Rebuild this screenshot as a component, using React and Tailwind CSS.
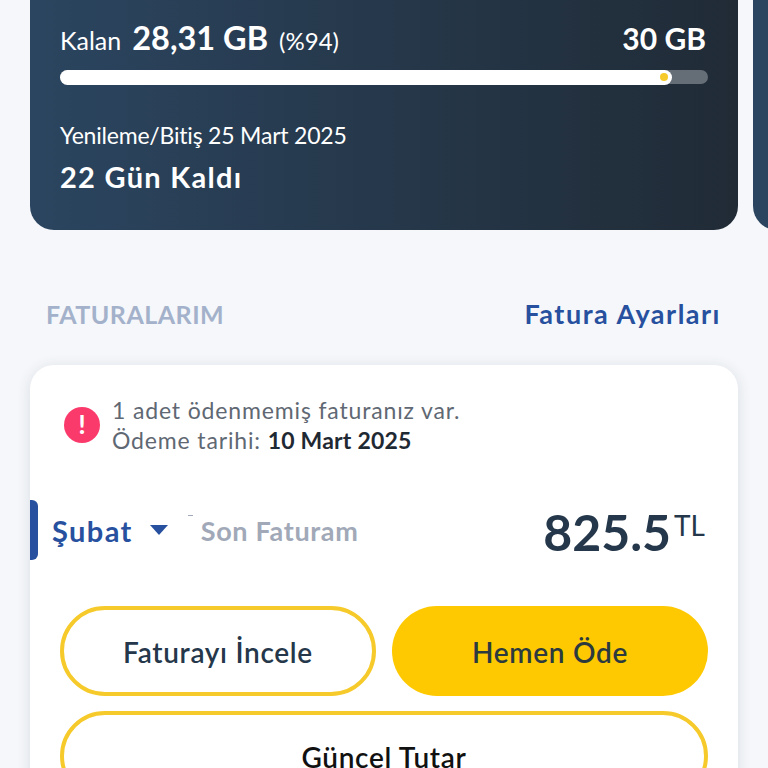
function OutlineButton({ children, className }) {
  return (
    <button className={`h-[90px] rounded-[45px] border-[4px] border-[#f6ca2a] bg-white pt-[3px] text-[28px] font-semibold tracking-[0.7px] ${className}`}>
      {children}
    </button>
  );
}

export default function App() {
  return (
    <div className="h-[768px] w-[768px] overflow-hidden bg-[#f5f7fa] font-['Lato',sans-serif]">
      {/* usage cards, the second one is cut off by the window */}
      <div className="flex gap-[15px] pl-[30px]">
        <div className="h-[230px] w-[708px] shrink-0 rounded-b-[24px] bg-gradient-to-r from-[#2b4560] to-[#202b36] px-[30px] pt-[14px] text-white">
          <div className="flex items-baseline justify-between pr-[2px]">
            <div className="flex items-baseline">
              <span className="text-[25px]">Kalan</span>
              <span className="ml-[11px] text-[32.5px] font-bold">28,31 GB</span>
              <span className="ml-[11px] text-[24px]">(%94)</span>
            </div>
            <span className="text-[30px] font-bold">30 GB</span>
          </div>
          <div className="mt-[7px] h-[14px] w-[648px] rounded-full bg-[#656d76]">
            <div className="flex h-[15px] w-[612px] items-center justify-end rounded-full bg-white pr-[4px]">
              <span className="h-[8px] w-[8px] rounded-full bg-[#f6ca2a]" />
            </div>
          </div>
          <p className="mt-[36px] text-[23px] leading-[30px] tracking-[-0.2px]">Yenileme/Bitiş 25 Mart 2025</p>
          <p className="mt-[9px] text-[29px] font-bold leading-[36px] tracking-[1.3px]">22 Gün Kaldı</p>
        </div>
        <div className="h-[230px] w-[40px] shrink-0 rounded-bl-[24px] bg-[#2b4560]" />
      </div>

      <div className="mt-[64px] flex items-center justify-between pl-[46px] pr-[47px]">
        <h2 className="text-[25px] font-bold tracking-[0.5px] text-[#a3b1ca]">FATURALARIM</h2>
        <a className="text-[27px] font-bold tracking-[1.5px] text-[#27509f]">Fatura Ayarları</a>
      </div>

      {/* invoice card */}
      <div className="ml-[30px] mt-[30px] h-[500px] w-[708px] rounded-[24px] bg-white pt-[30px] shadow-[0_2px_14px_rgba(60,70,90,0.14)]">
        <div className="flex items-center pl-[34px]">
          <span className="flex h-[36px] w-[36px] items-center justify-center rounded-full bg-[#fb3a6c] text-[27px] font-bold text-white">!</span>
          <div className="ml-[12px] text-[23px] leading-[30px] tracking-[0.85px] text-[#5f6873]">
            <p>1 adet ödenmemiş faturanız var.</p>
            <p>
              Ödeme tarihi: <span className="font-bold tracking-[0.2px] text-[#1f2933]">10 Mart 2025</span>
            </p>
          </div>
        </div>

        <div className="relative mt-[45px] flex h-[60px] items-center pr-[33px]">
          <span className="h-[60px] w-[8px] rounded-r-[6px] bg-[#27509f]" />
          <span className="ml-[14px] mt-[2px] text-[29px] font-bold tracking-[1.4px] text-[#27509f]">Şubat</span>
          <svg className="ml-[16px]" width="20" height="12" viewBox="0 0 20 12">
            <path d="M1 1h18l-9 10z" fill="#27509f" />
          </svg>
          <span className="absolute left-[158px] top-[15px] h-px w-[5px] bg-[#a1a9b8]" />
          <span className="ml-[32px] mt-[4px] text-[27px] font-bold tracking-[0.65px] text-[#a1a9b8]">Son Faturam</span>
          <div className="ml-auto mt-[4px] flex items-start text-[#25374a]">
            <span className="text-[50px] font-bold leading-none">825.5</span>
            <span className="ml-[3px] mt-[4px] text-[28px] leading-none">TL</span>
          </div>
        </div>

        <div className="mt-[46px] grid grid-cols-2 gap-x-[16px] gap-y-[15px] px-[30px]">
          <OutlineButton className="text-[#25374a]">Faturayı İncele</OutlineButton>
          <button className="h-[90px] rounded-[45px] bg-[#fec900] pt-[3px] text-[28px] font-semibold tracking-[0.7px] text-[#2c3a3f]">Hemen Öde</button>
          <OutlineButton className="col-span-2 text-[#111]">Güncel Tutar</OutlineButton>
        </div>
      </div>
    </div>
  );
}
